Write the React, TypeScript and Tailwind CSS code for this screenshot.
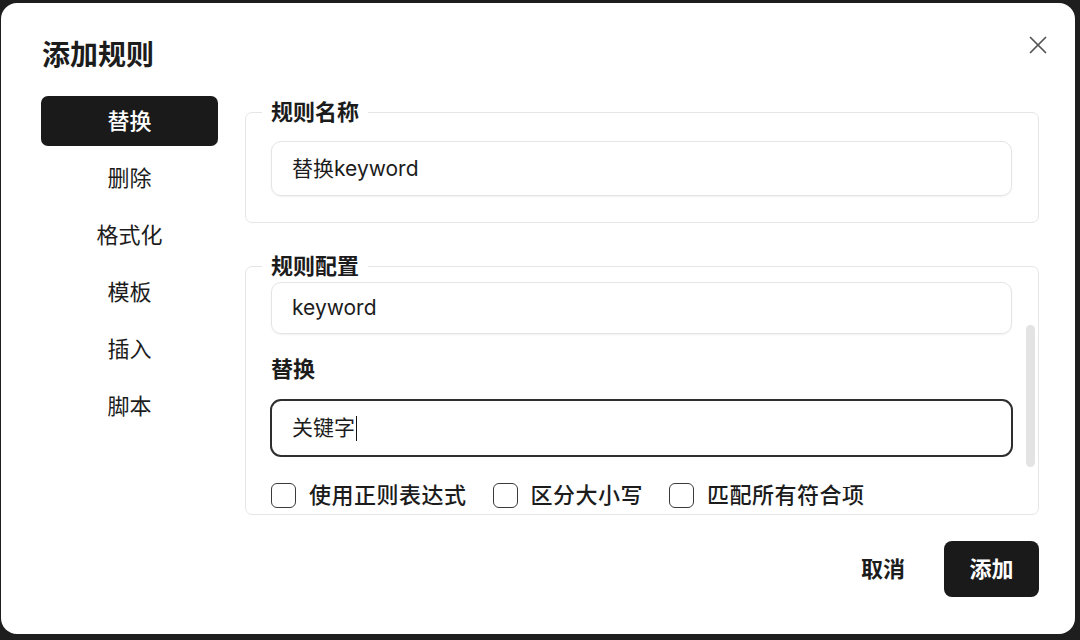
import { X } from 'lucide-react';

const tabs = ['替换', '删除', '格式化', '模板', '插入', '脚本'];
const options = ['使用正则表达式', '区分大小写', '匹配所有符合项'];

function Checkbox({ label }: { label: string }) {
    return (
        <label className="flex items-center gap-[13px]">
            <span className="w-[25px] h-[25px] rounded-[6px] border-[1.5px] border-[#3a3a3a] bg-white" />
            <span className="text-[22px] leading-[26px] font-medium tracking-[0.5px] text-[#1c1c1c]">{label}</span>
        </label>
    );
}

export default function App() {
    return (
        <div className="w-[1080px] h-[640px] bg-[#1e1e1e] pt-[3px] pl-[1px] font-[Inter,'Noto_Sans_CJK_SC',sans-serif]">
            <div className="relative w-[1074px] h-[631px] rounded-[16px] bg-white pl-[40px] pr-[36px] pt-[34px]">
                <button className="absolute top-[27px] right-[22px] text-[#555]">
                    <X size={30} strokeWidth={1.4} />
                </button>

                <h1 className="text-[28px] leading-[36px] font-bold text-[#1c1c1c] ml-[1px]">添加规则</h1>

                <div className="flex gap-[27px] mt-[23px]">
                    {/* sidebar */}
                    <nav className="w-[177px] flex flex-col gap-[7px]">
                        {tabs.map((t, i) => (
                            <div
                                key={t}
                                className={`h-[50px] flex items-center justify-center rounded-[7px] text-[22px] ${
                                    i === 0 ? 'bg-[#1a1a1a] text-white font-medium' : 'text-[#1c1c1c]'
                                }`}
                            >
                                {t}
                            </div>
                        ))}
                    </nav>

                    {/* form */}
                    <div className="flex-1 pt-[4px] flex flex-col">
                        <fieldset className="border border-[#e6e6e6] rounded-[7px] pl-[16px] pr-[26px] pb-[26px]">
                            <legend className="px-[9px] text-[22px] leading-[24px] font-bold text-[#1c1c1c]">规则名称</legend>
                            <div className="pl-[9px] pt-[17px]">
                                <div className="h-[55px] rounded-[10px] border border-[#e4e4e4] shadow-[0_1px_2px_rgba(0,0,0,0.06)] flex items-center px-[20px] text-[21px] text-[#1c1c1c]">
                                    替换keyword
                                </div>
                            </div>
                        </fieldset>

                        <fieldset className="mt-[31px] border border-[#e6e6e6] rounded-[7px] pl-[16px]">
                            <legend className="px-[9px] text-[22px] leading-[24px] font-bold text-[#1c1c1c]">规则配置</legend>
                            <div className="relative h-[236px] overflow-hidden">
                                <div className="pt-[4px] pl-[9px] pr-[26px]">
                                    <div className="h-[52px] rounded-[10px] border border-[#e4e4e4] shadow-[0_1px_2px_rgba(0,0,0,0.06)] flex items-center px-[20px] text-[21px] text-[#1c1c1c]">
                                        keyword
                                    </div>
                                    <div className="mt-[23px] text-[22px] leading-[24px] font-bold text-[#1c1c1c]">替换</div>
                                    <div className="mt-[18px] -mx-[1px] h-[58px] rounded-[11px] border-2 border-[#2e2e2e] flex items-center px-[20px] text-[21px] text-[#1c1c1c]">
                                        关键字
                                        <span className="ml-[1px] w-px h-[25px] bg-[#111]" />
                                    </div>
                                    <div className="mt-[25px] flex items-center gap-[26px]">
                                        {options.map((o) => (
                                            <Checkbox key={o} label={o} />
                                        ))}
                                    </div>
                                </div>
                                {/* scrollbar thumb */}
                                <div className="absolute right-[3px] top-[47px] w-[9px] h-[142px] rounded-full bg-[#e3e3e3]" />
                            </div>
                        </fieldset>

                        <div className="mt-[26px] flex items-center justify-end gap-[39px]">
                            <button className="text-[22px] font-bold text-[#1c1c1c]">取消</button>
                            <button className="w-[95px] h-[56px] rounded-[8px] bg-[#1a1a1a] text-white text-[22px] font-bold">
                                添加
                            </button>
                        </div>
                    </div>
                </div>
            </div>
        </div>
    );
}
